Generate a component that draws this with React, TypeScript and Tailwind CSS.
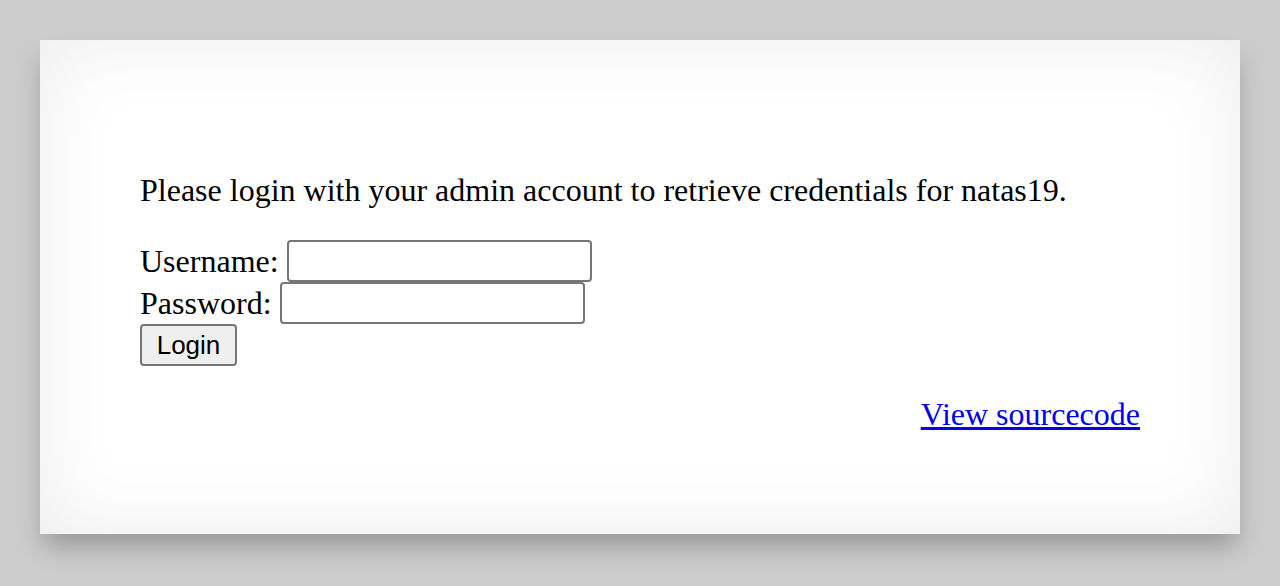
export default function App() {
  return (
    <div className="min-h-[586px] w-full bg-[#cccccc] p-10 font-['Liberation_Serif',serif] text-black">
      <div className="bg-white px-[100px] pb-[101px] pt-[100px] shadow-[inset_0_0_80px_rgba(0,0,0,0.08),0_16px_24px_-4px_rgba(0,0,0,0.26)]">
        <p className="mb-[31px] mt-8 text-[32px] leading-[37px]">
          Please login with your admin account to retrieve credentials for natas19.
        </p>
        <form onSubmit={(e) => e.preventDefault()} className="text-[32px] leading-[37px]">
          <div className="flex h-[42px] items-center">
            <span>Username:</span>
            <input name="username" className="ml-2 h-[42px] w-[305px] rounded-[4px] border-2 border-[#767676] bg-white" />
          </div>
          <div className="flex h-[42px] items-center">
            <span>Password:</span>
            <input name="password" className="ml-2 h-[42px] w-[305px] rounded-[4px] border-2 border-[#767676] bg-white" />
          </div>
          <div className="flex h-[42px] items-center">
            <button
              type="submit"
              className="h-[42px] w-[97px] rounded-[4px] border-2 border-[#767676] bg-[#efefef] font-['Liberation_Sans',Arial,sans-serif] text-[26px] leading-none text-black"
            >
              Login
            </button>
          </div>
        </form>
        <div className="mt-[30px] text-right text-[32px] leading-[37px]">
          <a href="#" className="text-[#0000ee] underline">
            View sourcecode
          </a>
        </div>
      </div>
    </div>
  );
}
